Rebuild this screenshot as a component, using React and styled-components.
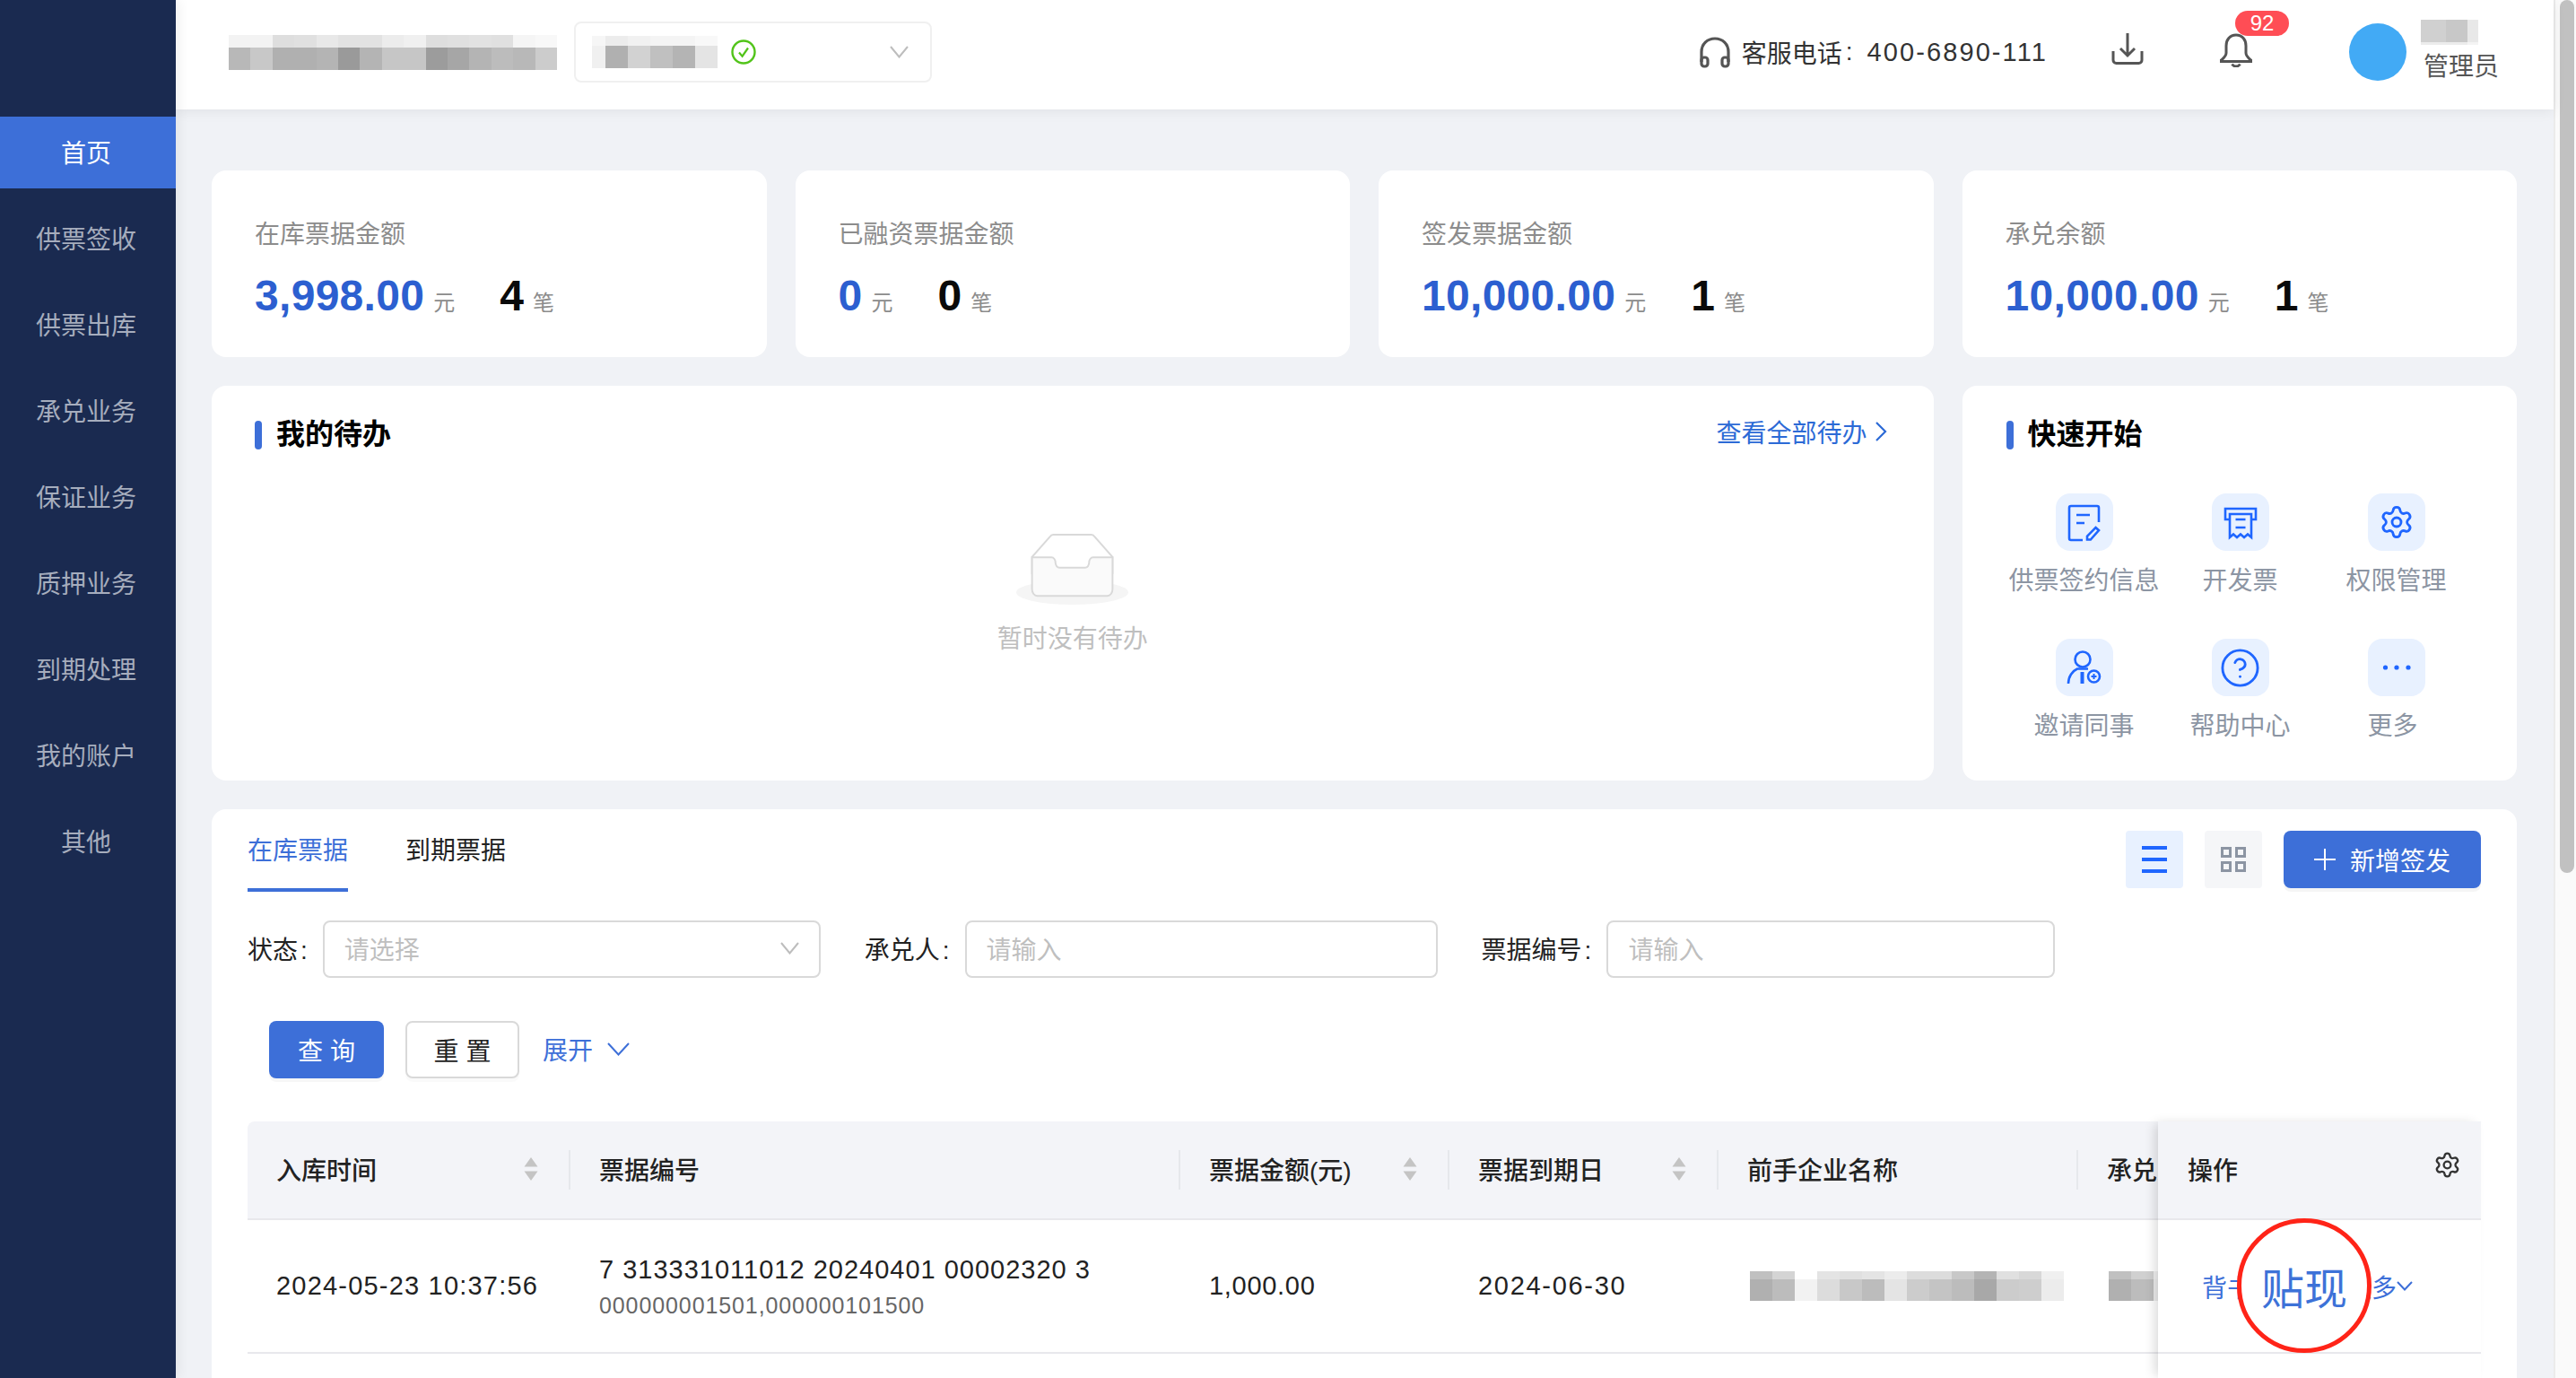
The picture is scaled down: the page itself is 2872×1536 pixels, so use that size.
import React from "react";
import styled, { createGlobalStyle } from "styled-components";
import { Settings, CircleHelp } from "lucide-react";

const BLUE = "#3d6fd8";
const ICON_BLUE = "#1f66ff";

const Global = createGlobalStyle`
  html, body { margin: 0; padding: 0; height: 100%; overflow: hidden; background: #f0f2f6; }
  body { font-family: "Liberation Sans", "Noto Sans CJK SC", sans-serif; font-size: 28px; color: #222; }
  #root { height: 100%; }
  * { box-sizing: border-box; }
`;

const Shell = styled.div`display: flex; width: 2872px; height: 1536px; overflow: hidden;`;

const Sidebar = styled.nav`
  width: 196px; flex: none; background: #1a2a50; padding-top: 130px;
  display: flex; flex-direction: column; gap: 16px;
  box-shadow: 4px 0 12px rgba(0, 0, 0, 0.06); position: relative; z-index: 3;
`;
const NavItem = styled.div`
  height: 80px; display: flex; align-items: center; justify-content: center; padding: 0 4px 2px 0;
  background: ${(p) => (p.$active ? BLUE : "transparent")};
  color: ${(p) => (p.$active ? "#fff" : "#a6adbd")};
`;

const Main = styled.div`flex: 1; min-width: 0; display: flex; flex-direction: column; background: #f0f2f6;`;

const Track = styled.div`
  width: 25px; flex: none; background: #fafafa; border-left: 2px solid #ebebeb; padding-left: 5px;
`;
const Thumb = styled.div`width: 16px; height: 973px; border-radius: 8px; background: #c1c1c1;`;

const Header = styled.header`
  height: 122px; flex: none; background: #fff; display: flex; align-items: center;
  padding: 0 61px 6px 59px; box-shadow: 0 2px 14px rgba(0, 0, 0, 0.07); position: relative; z-index: 2;
`;
const CompanySelect = styled.div`
  width: 399px; height: 68px; margin-left: 19px; border: 2px solid #f0f0f0; border-radius: 8px;
  display: flex; align-items: center; padding: 0 24px 0 18px;
`;
const Tail = styled.svg`flex: none; display: block; margin-left: ${(p) => p.$ml || 0}px;`;
const Spacer = styled.div`flex: 1;`;
const Hotline = styled.div`display: flex; align-items: center; color: #333;`;
const HotlineText = styled.span`margin-left: 13px; display: flex; align-items: center;`;
const HotlineColon = styled.span`margin: 0 16px 0 4px;`;
const Digits = styled.span`font-size: 29px; letter-spacing: 2.1px;`;
const HeaderIcon = styled.div`
  display: flex; position: relative; margin-left: ${(p) => p.$ml}px; margin-bottom: ${(p) => p.$mb}px;
`;
const Badge = styled.span`
  position: absolute; left: 18px; top: -25px; width: 60px; height: 28px; border-radius: 14px;
  background: #ff4d55; color: #fff; font-size: 24px; line-height: 28px; text-align: center;
`;
const Avatar = styled.div`width: 64px; height: 64px; border-radius: 50%; background: #42aaf5; margin-left: 107px; flex: none;`;
const UserBlock = styled.div`display: flex; flex-direction: column; margin-left: 16px; width: 87px;`;
const RoleText = styled.span`color: #555; line-height: 40px; margin-top: 5px; margin-left: 3px; white-space: nowrap;`;

const Content = styled.main`
  flex: 1; min-height: 0; padding: 68px 41px 0 40px; display: flex; flex-direction: column; gap: 32px;
`;
const StatRow = styled.section`display: grid; grid-template-columns: repeat(4, 1fr); gap: 32px;`;
const Card = styled.div`background: #fff; border-radius: 16px;`;
const StatCard = styled(Card)`height: 208px; padding: 52px 0 0 48px;`;
const StatTitle = styled.div`line-height: 40px; color: #8c8c8c;`;
const StatValues = styled.div`display: flex; align-items: baseline; margin-top: 20px; line-height: 56px;`;
const Amount = styled.span`font-size: 48px; font-weight: 700; color: #2c5fd0; letter-spacing: 0.3px;`;
const Count = styled.span`font-size: 48px; font-weight: 700; color: #0a0a0a; margin-left: 50px;`;
const Unit = styled.span`font-size: 24px; color: #8c8c8c; margin-left: 10px;`;

const MiddleRow = styled.section`display: grid; grid-template-columns: 1fr 618.5px; gap: 32px;`;
const TodoCard = styled(Card)`height: 440px; padding: 39px 52px 0 48px;`;
const QuickCard = styled(Card)`height: 440px; padding: 39px 0 0 49px;`;
const CardHead = styled.div`display: flex; align-items: center; justify-content: space-between; height: 32px;`;
const SectionTitle = styled.h2`
  margin: 0; display: flex; align-items: flex-start; gap: 16px; height: 32px; line-height: 30px;
  font-size: 32px; font-weight: 600; color: #000;
  &::before { content: ""; flex: none; width: 8px; height: 32px; border-radius: 4px; background: ${BLUE}; }
`;
const MoreLink = styled.a`display: flex; align-items: center; gap: 8px; color: #2c6ad6; margin-bottom: 8px;`;
const Empty = styled.div`display: flex; flex-direction: column; align-items: center; margin: 93px 0 0 4px;`;
const EmptyText = styled.div`margin-top: 19px; line-height: 40px; color: #bfbfbf;`;

const QuickGrid = styled.div`
  display: grid; grid-template-columns: repeat(3, 174px); row-gap: 44px; margin-top: 49px;
`;
const QuickItem = styled.div`display: flex; flex-direction: column; align-items: center;`;
const Tile = styled.div`
  width: 64px; height: 64px; border-radius: 16px; display: flex; align-items: center; justify-content: center;
  background: #e8f1ff;
`;
const QuickLabel = styled.div`
  margin-top: 14px; margin-right: ${(p) => p.$shift || 0}px; line-height: 40px; color: #8c95a3; white-space: nowrap;
`;

const TableCard = styled(Card)`
  flex: 1; min-height: 0; border-radius: 16px 16px 0 0; padding: 24px 40px 0; display: flex; flex-direction: column;
`;
const Toolbar = styled.div`display: flex; justify-content: space-between; height: 68px;`;
const Tabs = styled.div`display: flex; gap: 64px;`;
const Tab = styled.div`
  height: 68px; line-height: 46px; border-bottom: 4px solid ${(p) => (p.$active ? BLUE : "transparent")};
  color: ${(p) => (p.$active ? BLUE : "#222")};
`;
const ToolActions = styled.div`display: flex; height: 64px; align-items: center;`;
const ViewTile = styled.div`
  width: 64px; height: 64px; margin-right: 24px; border-radius: 4px; display: flex; align-items: center; justify-content: center;
  background: ${(p) => p.$bg};
`;
const AddButton = styled.button`
  width: 220px; height: 64px; border: 0; border-radius: 8px; background: ${BLUE}; color: #fff; font: inherit;
  display: flex; align-items: center; justify-content: center; gap: 16px; padding: 0;
  box-shadow: 0 4px 0 rgba(0, 0, 0, 0.04);
`;
const FilterRow = styled.div`display: flex; gap: 49px; margin-top: 32px;`;
const Field = styled.label`display: flex; align-items: center;`;
const FieldLabel = styled.span`margin: 0 17px 2px 0; color: #222; white-space: nowrap;`;
const FieldColon = styled.span`margin-left: 3px;`;
const Control = styled.div`
  width: ${(p) => p.$w}px; height: 64px; border: 2px solid #d9d9d9; border-radius: 8px;
  display: flex; align-items: center; justify-content: space-between; padding: 0 22px 2px; color: #bfbfbf;
`;
const ActionRow = styled.div`display: flex; align-items: center; margin-top: 48px; padding-left: 24px;`;
const PrimaryButton = styled.button`
  width: 128px; height: 64px; border: 0; border-radius: 8px; background: ${BLUE}; color: #fff; font: inherit; padding: 0;
  box-shadow: 0 4px 0 rgba(0, 0, 0, 0.03);
`;
const GhostButton = styled.button`
  width: 127px; height: 64px; margin-left: 24px; border: 2px solid #d9d9d9; border-radius: 8px; background: #fff;
  color: #222; font: inherit; padding: 0; box-shadow: 0 4px 0 rgba(0, 0, 0, 0.02);
`;
const Expand = styled.a`display: flex; align-items: center; gap: 16px; margin: 0 0 2px 26px; color: ${BLUE};`;

const Table = styled.div`flex: 1; min-height: 0; display: flex; margin-top: 48px;`;
const TableScroll = styled.div`flex: 1; min-width: 0; overflow: hidden;`;
const columns = "360px 680px 300px 300px 401px 400px";
const HeadRow = styled.div`
  display: grid; grid-template-columns: ${columns}; align-items: center; width: 2441px;
  height: 110px; background: #f3f4f8; border-bottom: 2px solid #e8e8ec; border-top-left-radius: 8px;
`;
const HeadCell = styled.div`
  height: 44px; display: flex; align-items: center; justify-content: space-between; padding: 0 32px 2px;
  font-weight: 500; color: #222; white-space: nowrap;
  border-right: ${(p) => (p.$last ? "0" : "2px solid #e6e8ec")};
`;
const BodyRow = styled.div`
  display: grid; grid-template-columns: ${columns}; align-items: center; width: 2441px;
  height: 149px; border-bottom: 2px solid #e8e8ec;
`;
const Cell = styled.div`padding: 0 32px; font-size: 29px; color: #222; letter-spacing: ${(p) => p.$ls}px; white-space: nowrap;`;
const MainCode = styled.div`letter-spacing: 1px; line-height: 40px; margin-bottom: 2px;`;
const SubCode = styled.div`font-size: 25px; color: #666; letter-spacing: 0.9px; line-height: 36px;`;
const MosaicCell = styled.div`padding-left: ${(p) => p.$pl}px; display: flex;`;

const FixedColumn = styled.div`
  width: 360px; flex: none; background: #fff; position: relative; z-index: 1;
  box-shadow: -6px 0 12px -3px rgba(0, 0, 0, 0.16);
`;
const FixedHead = styled.div`
  height: 110px; background: #f3f4f8; border-bottom: 2px solid #e8e8ec; display: flex; align-items: center;
  justify-content: space-between; padding: 0 22px 2px 33px; font-weight: 500; color: #222;
`;
const GearWrap = styled.div`display: flex; margin-bottom: 9px;`;
const FixedBody = styled.div`
  height: 149px; border-bottom: 2px solid #e8e8ec; display: flex; align-items: center; padding-left: 49px;
  position: relative; color: ${BLUE};
`;
const ActionGap = styled.span`width: 105px; flex: none;`;
const ActionMore = styled.span`display: flex; align-items: center;`;
const Circled = styled.div`
  position: absolute; left: 88px; top: -2px; width: 150px; height: 150px; border-radius: 50%;
  border: 5px solid #ff2418; background: #fff; display: flex; align-items: center; justify-content: center;
  font-size: 48px; color: #3d72d8; z-index: 2;
`;

/* ---------- drawings ---------- */
const MosaicSvg = styled.svg`display: block; flex: none;`;
function Mosaic({ cols, top, bottom, topH, botH, cw }) {
  const widths = top.map((_, i) => (cols ? cols[i] : cw));
  const total = widths.reduce((a, b) => a + b, 0);
  let x = 0;
  return (
    <MosaicSvg width={total} height={topH + botH} shapeRendering="crispEdges">
      {top.map((c, i) => {
        const cx = x;
        x += widths[i];
        return (
          <g key={i}>
            <rect x={cx} y={0} width={widths[i]} height={topH} fill={c} />
            <rect x={cx} y={topH} width={widths[i]} height={botH} fill={bottom[i]} />
          </g>
        );
      })}
    </MosaicSvg>
  );
}

const Chevron = ({ color = "#bdbdbd", w = 21, h = 14, sw = 2 }) => (
  <Tail width={w} height={h} viewBox={`0 0 ${w} ${h}`} fill="none">
    <path d={`M1 1 L${w / 2} ${h - 1.5} L${w - 1} 1`} stroke={color} strokeWidth={sw} />
  </Tail>
);

const Sorter = () => (
  <Tail width="20" height="26" viewBox="0 0 20 26">
    <path d="M10 0l7.500 10.500h-15z M10 26l-7.500-10.500h15z" fill="#c4c4c4" />
  </Tail>
);

const Check = () => (
  <Tail width="28" height="28" viewBox="0 0 28 28" fill="none" $ml={15}>
    <circle cx="14" cy="14" r="12.500" stroke="#52c41a" strokeWidth="2.400" />
    <path d="M9 14.500l3.600 4.200L19 9.500" stroke="#52c41a" strokeWidth="2.200" />
  </Tail>
);

const Headset = () => (
  <Tail width="34" height="35" viewBox="0 0 34 35" fill="none" stroke="#555" strokeWidth="3.200">
    <path d="M2 28V17C2 8 8.500 2 17 2s15 6 15 15v11" />
    <rect x="2" y="23" width="7" height="10" rx="3" />
    <rect x="25" y="23" width="7" height="10" rx="3" />
  </Tail>
);

const DownloadIcon = () => (
  <Tail width="36" height="36" viewBox="0 0 36 36" fill="none" stroke="#555" strokeWidth="3">
    <path d="M18 1v25M10 18l8 8 8-8" />
    <path d="M2 21v10a3.500 3.500 0 0 0 3.500 3.500h25A3.500 3.500 0 0 0 34 31V21" />
  </Tail>
);

const BellIcon = () => (
  <Tail width="38" height="38" viewBox="0 0 38 38" fill="none" stroke="#555" strokeWidth="3">
    <path d="M19 2c-7 0-11 5.500-11 12v8c0 3.500-2.500 5.500-5.500 8v1.500h33V30c-3-2.500-5.500-4.500-5.500-8v-8c0-6.500-4-12-11-12z" />
    <path d="M14.500 34.500c1 1.500 2.500 2.500 4.500 2.500s3.500-1 4.500-2.500" />
  </Tail>
);

const iconProps = { width: 64, height: 64, viewBox: "0 0 64 64", fill: "none", stroke: ICON_BLUE, strokeWidth: 2.6 };

const DocEditIcon = () => (
  <Tail {...iconProps}>
    <path d="M48 32V16a2 2 0 0 0-2-2H17a2 2 0 0 0-2 2v34a2 2 0 0 0 2 2h13" />
    <path d="M23 24h15M23 33h9" />
    <path d="M44.500 38l3.500 3.200L38.800 51.500H35v-3.800z" />
  </Tail>
);
const InvoiceIcon = () => (
  <Tail {...iconProps}>
    <path d="M19 29h-4V17h34v12h-4" />
    <path d="M20 23h24v26l-4-3.500-4 3.500-4-3.500-4 3.500-4-3.500-4 3.500z" />
    <path d="M26.500 29h11M26.500 38h11" />
  </Tail>
);
const InviteIcon = () => (
  <Tail {...iconProps}>
    <circle cx="30" cy="23" r="8.500" />
    <path d="M14 50c0-8 4.500-14 10-16.500h12" />
    <path d="M29.500 37v13" strokeWidth="4" />
    <circle cx="42.500" cy="42" r="6.500" />
    <path d="M39.500 42h6M42.500 39v6" strokeWidth="2" />
  </Tail>
);
const DotsIcon = () => (
  <Tail width="64" height="64" viewBox="0 0 64 64" fill={ICON_BLUE}>
    <circle cx="19.500" cy="32" r="2.600" />
    <circle cx="32" cy="32" r="2.600" />
    <circle cx="45" cy="32" r="2.600" />
  </Tail>
);
const ListIcon = () => (
  <Tail width="28" height="30" viewBox="0 0 28 30" fill={ICON_BLUE}>
    <rect y="0" width="28" height="4" />
    <rect y="13" width="28" height="4" />
    <rect y="26" width="28" height="4" />
  </Tail>
);
const GridIcon = () => (
  <Tail width="28" height="28" viewBox="0 0 28 28" fill="none" stroke="#8c95a3" strokeWidth="3">
    <rect x="1.500" y="1.500" width="9" height="9" />
    <rect x="17.500" y="1.500" width="9" height="9" />
    <rect x="1.500" y="17.500" width="9" height="9" />
    <rect x="17.500" y="17.500" width="9" height="9" />
  </Tail>
);
const PlusIcon = () => (
  <Tail width="24" height="24" viewBox="0 0 24 24" stroke="#fff" strokeWidth="2">
    <path d="M12 0v24M0 12h24" />
  </Tail>
);
const EmptyIcon = () => (
  <Tail width="125" height="80" viewBox="0 0 64 41">
    <g transform="translate(0 1)" fill="none" fillRule="evenodd">
      <ellipse fill="#f5f5f5" cx="32" cy="33" rx="32" ry="7" />
      <g fillRule="nonzero" stroke="#d9d9d9">
        <path d="M55 12.760L44.854 1.258C44.367.474 43.656 0 42.907 0H21.093c-.749 0-1.460.474-1.947 1.257L9 12.761V22h46v-9.240z" />
        <path
          d="M41.613 15.931c0-1.605.994-2.930 2.227-2.931H55v18.137C55 33.260 53.680 35 52.050 35h-40.100C10.320 35 9 33.259 9 31.137V13h11.160c1.233 0 2.227 1.323 2.227 2.928v.022c0 1.605 1.005 2.901 2.237 2.901h14.752c1.232 0 2.237-1.308 2.237-2.913v-.007z"
          fill="#fafafa"
        />
      </g>
    </g>
  </Tail>
);

/* ---------- data ---------- */
const navItems = ["首页", "供票签收", "供票出库", "承兑业务", "保证业务", "质押业务", "到期处理", "我的账户", "其他"];
const stats = [
  { title: "在库票据金额", amount: "3,998.00", count: "4" },
  { title: "已融资票据金额", amount: "0", count: "0" },
  { title: "签发票据金额", amount: "10,000.00", count: "1" },
  { title: "承兑余额", amount: "10,000.00", count: "1" },
];
const quick = [
  { label: "供票签约信息", icon: <DocEditIcon /> },
  { label: "开发票", icon: <InvoiceIcon /> },
  { label: "权限管理", icon: <Settings size={40} color={ICON_BLUE} strokeWidth={1.7} /> },
  { label: "邀请同事", icon: <InviteIcon /> },
  { label: "帮助中心", icon: <CircleHelp size={47} color={ICON_BLUE} strokeWidth={1.45} /> },
  { label: "更多", icon: <DotsIcon />, shift: 8 },
];
const heads = [
  { label: "入库时间", sort: true },
  { label: "票据编号" },
  { label: "票据金额(元)", sort: true },
  { label: "票据到期日", sort: true },
  { label: "前手企业名称" },
  { label: "承兑人", last: true },
];
const fields = [
  { label: "状态", w: 555, text: "请选择", arrow: true },
  { label: "承兑人", w: 527, text: "请输入" },
  { label: "票据编号", w: 500, text: "请输入" },
];

const companyTop = ["#f3f3f3","#f3f3f3","#dedede","#e0e0e0","#e8e8e8","#e2e2e2","#e2e2e2","#ececec","#f0f0f0","#dedede","#e0e0e0","#e2e2e2","#e0e0e0","#f5f5f5","#f8f8f8"];
const companyBot = ["#b8b8b8","#c8c8c8","#b0b0b0","#b0b0b0","#b4b4b4","#9a9a9a","#b4b4b4","#c6c6c6","#c6c6c6","#9c9c9c","#a6a6a6","#b4b4b4","#bcbcbc","#b8b8b8","#cccccc"];
const rowTop = ["#c0c0c0","#d4d4d4","#ffffff","#e4e4e4","#e0e0e0","#e4e4e4","#ececec","#dcdcdc","#dcdcdc","#c8c8c8","#b4b4b4","#e0e0e0","#d8d8d8","#f0f0f0"];
const rowBot = ["#b0b0b0","#bcbcbc","#f2f2f2","#dcdcdc","#c8c8c8","#bcbcbc","#e4e4e4","#cccccc","#c4c4c4","#bcbcbc","#a8a8a8","#cccccc","#cecece","#ececec"];

export default function App() {
  return (
    <Shell>
      <Global />
      <Sidebar>
        {navItems.map((n, i) => (
          <NavItem key={n} $active={i === 0}>{n}</NavItem>
        ))}
      </Sidebar>
      <Main>
        <Header>
          <Mosaic top={companyTop} bottom={companyBot} topH={14} botH={25} cw={24.4} />
          <CompanySelect>
            <Mosaic
              cols={[15, 25, 25, 25, 25, 25]}
              top={["#f6f6f6","#ececec","#f1f1f1","#f4f4f4","#f4f4f4","#f8f8f8"]}
              bottom={["#f0f0f0","#b0b0b0","#d2d2d2","#c0c0c0","#b4b4b4","#e4e4e4"]}
              topH={11}
              botH={25}
            />
            <Check />
            <Spacer />
            <Chevron />
          </CompanySelect>
          <Spacer />
          <Hotline>
            <Headset />
            <HotlineText>客服电话<HotlineColon>:</HotlineColon><Digits>400-6890-111</Digits></HotlineText>
          </Hotline>
          <HeaderIcon $ml={71} $mb={8}><DownloadIcon /></HeaderIcon>
          <HeaderIcon $ml={84} $mb={4}>
            <BellIcon />
            <Badge>92</Badge>
          </HeaderIcon>
          <Avatar />
          <UserBlock>
            <Mosaic
              cols={[28, 24, 12]}
              top={["#d0d0d0","#c8c8c8","#e8e8e8"]}
              bottom={["#ececec","#ececec","#f4f4f4"]}
              topH={25}
              botH={3}
            />
            <RoleText>管理员</RoleText>
          </UserBlock>
        </Header>
        <Content>
          <StatRow>
            {stats.map((s) => (
              <StatCard key={s.title}>
                <StatTitle>{s.title}</StatTitle>
                <StatValues>
                  <Amount>{s.amount}</Amount>
                  <Unit>元</Unit>
                  <Count>{s.count}</Count>
                  <Unit>笔</Unit>
                </StatValues>
              </StatCard>
            ))}
          </StatRow>
          <MiddleRow>
            <TodoCard>
              <CardHead>
                <SectionTitle>我的待办</SectionTitle>
                <MoreLink>
                  查看全部待办
                  <Tail width="14" height="24" viewBox="0 0 14 24" fill="none">
                    <path d="M2 2l10 10L2 22" stroke="#2c6ad6" strokeWidth="2.200" />
                  </Tail>
                </MoreLink>
              </CardHead>
              <Empty>
                <EmptyIcon />
                <EmptyText>暂时没有待办</EmptyText>
              </Empty>
            </TodoCard>
            <QuickCard>
              <SectionTitle>快速开始</SectionTitle>
              <QuickGrid>
                {quick.map((q) => (
                  <QuickItem key={q.label}>
                    <Tile>{q.icon}</Tile>
                    <QuickLabel $shift={q.shift}>{q.label}</QuickLabel>
                  </QuickItem>
                ))}
              </QuickGrid>
            </QuickCard>
          </MiddleRow>
          <TableCard>
            <Toolbar>
              <Tabs>
                <Tab $active>在库票据</Tab>
                <Tab>到期票据</Tab>
              </Tabs>
              <ToolActions>
                <ViewTile $bg="#e8f1ff"><ListIcon /></ViewTile>
                <ViewTile $bg="#f5f6f8"><GridIcon /></ViewTile>
                <AddButton><PlusIcon />新增签发</AddButton>
              </ToolActions>
            </Toolbar>
            <FilterRow>
              {fields.map((f) => (
                <Field key={f.label}>
                  <FieldLabel>{f.label}<FieldColon>:</FieldColon></FieldLabel>
                  <Control $w={f.w}>{f.text}{f.arrow && <Chevron />}</Control>
                </Field>
              ))}
            </FilterRow>
            <ActionRow>
              <PrimaryButton>查 询</PrimaryButton>
              <GhostButton>重 置</GhostButton>
              <Expand>展开<Chevron color={BLUE} w={25} h={15} /></Expand>
            </ActionRow>
            <Table>
              <TableScroll>
                <HeadRow>
                  {heads.map((h) => (
                    <HeadCell key={h.label} $last={h.last}>
                      {h.label}
                      {h.sort && <Sorter />}
                    </HeadCell>
                  ))}
                </HeadRow>
                <BodyRow>
                  <Cell $ls={1.2}>2024-05-23 10:37:56</Cell>
                  <Cell>
                    <MainCode>7 313331011012 20240401 00002320 3</MainCode>
                    <SubCode>000000001501,000000101500</SubCode>
                  </Cell>
                  <Cell $ls={0.7}>1,000.00</Cell>
                  <Cell $ls={1.7}>2024-06-30</Cell>
                  <MosaicCell $pl={35}>
                    <Mosaic top={rowTop} bottom={rowBot} topH={9} botH={24} cw={25} />
                  </MosaicCell>
                  <MosaicCell $pl={34}>
                    <Mosaic
                      cols={[25, 25, 8]}
                      top={["#c0c0c0","#d0d0d0","#f0f0f0"]}
                      bottom={["#b0b0b0","#bcbcbc","#ececec"]}
                      topH={9}
                      botH={24}
                    />
                  </MosaicCell>
                </BodyRow>
              </TableScroll>
              <FixedColumn>
                <FixedHead>
                  操作
                  <GearWrap><Settings size={31} color="#333" strokeWidth={1.8} /></GearWrap>
                </FixedHead>
                <FixedBody>
                  背书
                  <ActionGap />
                  <ActionMore>更多<Chevron color={BLUE} w={18} h={11} /></ActionMore>
                  <Circled>贴现</Circled>
                </FixedBody>
              </FixedColumn>
            </Table>
          </TableCard>
        </Content>
      </Main>
      <Track><Thumb /></Track>
    </Shell>
  );
}
